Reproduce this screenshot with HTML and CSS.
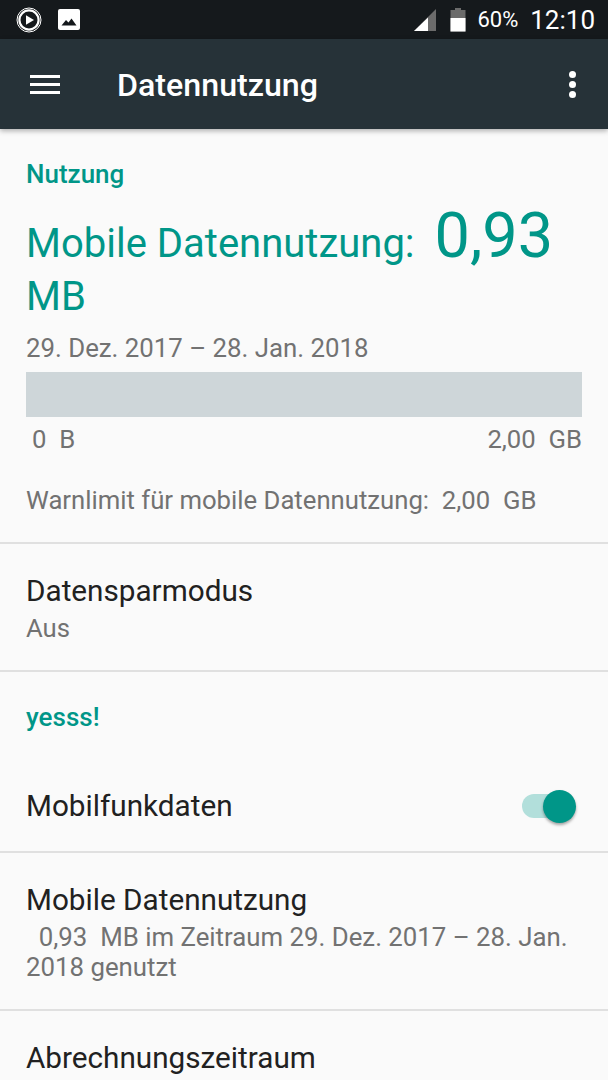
FILE: index.html
```html
<!DOCTYPE html>
<html lang="de">
<head>
  <meta charset="utf-8">
  <title>Datennutzung</title>
  <link rel="stylesheet" href="styles.css">
</head>
<body>
  <!-- Status bar -->
  <div class="statusbar">
    <svg class="status-icon" width="26" height="26" viewBox="0 0 26 26">
      <circle cx="13" cy="13" r="12" fill="none" stroke="#fff" stroke-width="1"/>
      <circle cx="13" cy="13" r="9.6" fill="none" stroke="#fff" stroke-width="2.2"/>
      <path d="M10 8.3 L18 13 L10 17.7 Z" fill="#fff"/>
    </svg>
    <svg class="status-icon image-icon" width="22" height="22" viewBox="0 0 22 22">
      <rect x="0" y="0" width="22" height="21" rx="2" fill="#fff"/>
      <path d="M3.5 16.5 L8 11 L10.5 13.5 L13.5 9.5 L18.5 16.5 Z" fill="#15191c"/>
    </svg>
    <div class="status-right">
      <svg width="22" height="22" viewBox="0 0 22 22">
        <path d="M22 0 V22 H0 Z" fill="#6b6b6b"/>
        <path d="M14 8.5 V22 H0 Z" fill="#fff"/>
      </svg>
      <svg class="battery" width="16" height="24" viewBox="0 0 16 24">
        <path d="M5 0 H11 V2 H15.5 V23.5 H0.5 V2 H5 Z" fill="#6b6b6b"/>
        <rect x="0.5" y="10" width="15" height="13.5" fill="#fff"/>
      </svg>
      <span class="battery-text">60%</span>
      <span class="clock">12:10</span>
    </div>
  </div>

  <!-- Toolbar -->
  <div class="toolbar">
    <div class="hamburger"><i></i><i></i><i></i></div>
    <div class="toolbar-title">Datennutzung</div>
    <div class="overflow"><i></i><i></i><i></i></div>
  </div>

  <!-- Usage summary -->
  <div class="section usage">
    <div class="section-title">Nutzung</div>
    <div class="usage-big">Mobile Datennutzung: <span class="usage-value">0,93</span> MB</div>
    <div class="usage-date">29. Dez. 2017 – 28. Jan. 2018</div>
    <div class="usage-bar"></div>
    <div class="usage-scale"><span class="scale-min">0 &nbsp;B</span><span>2,00 &nbsp;GB</span></div>
    <div class="usage-warn">Warnlimit für mobile Datennutzung: &nbsp;2,00 &nbsp;GB</div>
  </div>

  <div class="row saver">
    <div class="row-title">Datensparmodus</div>
    <div class="row-sub">Aus</div>
  </div>

  <div class="section carrier">
    <div class="section-title">yesss!</div>
  </div>

  <div class="row toggle-row">
    <div class="row-title">Mobilfunkdaten</div>
    <div class="switch"><div class="switch-thumb"></div></div>
  </div>

  <div class="row data-usage">
    <div class="row-title">Mobile Datennutzung</div>
    <div class="row-sub">&nbsp; 0,93 &nbsp;MB im Zeitraum 29. Dez. 2017 – 28. Jan. 2018 genutzt</div>
  </div>

  <div class="row last">
    <div class="row-title">Abrechnungszeitraum</div>
  </div>
</body>
</html>
```

FILE: styles.css
```css
html, body {
  height: 100%;
}

body {
  margin: 0;
  height: 1080px;
  overflow: hidden;
  background-color: #fafafa;
  font-family: Roboto, "Liberation Sans", sans-serif;
  color: #212121;
}

.statusbar {
  height: 39px;
  background-color: #15191c;
  display: flex;
  align-items: center;
  padding: 0 13px 0 16px;
  color: #fff;
}

.image-icon {
  margin-left: 16px;
}

.status-right {
  margin-left: auto;
  display: flex;
  align-items: center;
}

.battery {
  margin-left: 14px;
}

.battery-text {
  font-size: 22px;
  margin-left: 11px;
}

.clock {
  font-size: 26px;
  margin-left: 12px;
}

.toolbar {
  height: 90px;
  background-color: #263238;
  display: flex;
  align-items: center;
  padding: 0 30px;
  color: #fff;
  box-shadow: 0 2px 5px rgba(0, 0, 0, 0.3);
  position: relative;
}

.hamburger i {
  display: block;
  width: 30px;
  height: 3px;
  margin: 5px 0;
  background-color: #fff;
}

.toolbar-title {
  font-size: 32.2px;
  font-weight: 500;
  margin-left: 57px;
  padding-top: 2px;
}

.overflow {
  margin-left: auto;
  margin-right: 2px;
}

.overflow i {
  display: block;
  width: 7px;
  height: 7px;
  margin: 3px 0;
  border-radius: 50%;
  background-color: #fff;
}

.section {
  padding: 0 26px;
}

.section-title {
  color: #009688;
  font-size: 26px;
  font-weight: 500;
  line-height: 32px;
}

.usage {
  padding-top: 29px;
  height: 415px;
  box-sizing: border-box;
  border-bottom: 2px solid #e0e0e0;
}

.usage-big {
  color: #009688;
  font-size: 40px;
  line-height: 53px;
  margin-top: 19px;
}

.usage-value {
  font-size: 63px;
  margin-left: 10px;
  line-height: 53px;
}

.usage-date,
.usage-scale,
.usage-warn,
.row-sub {
  color: #727272;
  font-size: 25.7px;
}

.usage-date {
  font-size: 25.8px;
  line-height: 32px;
  margin-top: 9px;
}

.usage-bar {
  height: 45px;
  background-color: #ced6d9;
  margin-top: 8px;
}

.usage-scale {
  display: flex;
  justify-content: space-between;
  line-height: 32px;
  margin-top: 6px;
}

.scale-min {
  margin-left: 6px;
}

.usage-warn {
  line-height: 32px;
  margin-top: 29px;
}

.row {
  padding: 0 26px;
  box-sizing: border-box;
  border-bottom: 2px solid #e0e0e0;
}

.row-title {
  font-size: 29.7px;
  line-height: 38px;
}

.row-sub {
  line-height: 30px;
}

.saver {
  height: 128px;
  padding-top: 28px;
}

.saver .row-sub {
  margin-top: 3px;
}

.carrier {
  padding-top: 29px;
  height: 90px;
  box-sizing: border-box;
}

.toggle-row {
  height: 91px;
  display: flex;
  align-items: center;
  justify-content: space-between;
  padding-bottom: 2px;
}

.switch {
  width: 50px;
  height: 24px;
  border-radius: 12px;
  background-color: #b2dfdb;
  position: relative;
  margin-right: 10px;
}

.switch-thumb {
  position: absolute;
  right: -4px;
  top: -4px;
  width: 33px;
  height: 33px;
  border-radius: 50%;
  background-color: #009688;
  box-shadow: 0 2px 3px rgba(0, 0, 0, 0.35);
}

.data-usage {
  height: 158px;
  padding-top: 28px;
}

.data-usage .row-sub {
  margin-top: 3px;
  font-size: 25.8px;
}

.last {
  border-bottom: 0;
  padding-top: 28px;
}
```
